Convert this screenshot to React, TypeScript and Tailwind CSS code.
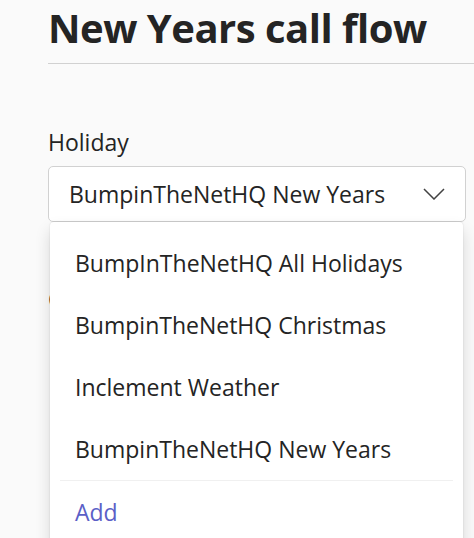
import React from "react";

const items = [
  "BumpInTheNetHQ All Holidays",
  "BumpinTheNetHQ Christmas",
  "Inclement Weather",
  "BumpinTheNetHQ New Years",
];

export default function App() {
  return (
    <div
      className="w-[474px] h-[538px] overflow-hidden bg-[#fafafa] text-[#242424]"
      style={{ fontFamily: '"Open Sans", "Noto Sans", sans-serif' }}
    >
      <div className="pl-[48px]">
        <h1 className="text-[40px] font-bold leading-[52px] pt-[2px] tracking-[-0.5px]">New Years call flow</h1>
        <div className="mt-[9px] h-px bg-[#d1d1d1]" />
        <div className="mt-[63px] text-[23px] leading-[30px]">Holiday</div>
        <div className="relative mt-[9px] w-[418px]">
          <div className="h-[56px] flex items-center justify-between bg-white border border-[#d1d1d1] rounded-[5px] pl-[20px] pr-[20px]">
            <span className="text-[23px]">BumpinTheNetHQ New Years</span>
            <svg width="22" height="12" viewBox="0 0 22 12">
              <path d="M1 1 L11 11 L21 1" fill="none" stroke="#424242" strokeWidth="1.5" />
            </svg>
          </div>
          <div className="mt-[62px] text-[23px] leading-[30px] text-[#242424]">Calls</div>
          <div className="absolute left-[2px] top-[56px] w-[413px] h-[340px] bg-white rounded-[4px] shadow-[0_8px_16px_rgba(0,0,0,0.14),0_0_2px_rgba(0,0,0,0.12)] pt-[10px]">
            {items.map((t) => (
              <div key={t} className="h-[62px] flex items-center pl-[25px] text-[23px]">
                {t}
              </div>
            ))}
            <div className="mx-[10px] h-px bg-[#f0f0f0]" />
            <div className="h-[62px] flex items-center pl-[25px] text-[23px] text-[#5b5fc7]">Add</div>
          </div>
        </div>
      </div>
    </div>
  );
}
